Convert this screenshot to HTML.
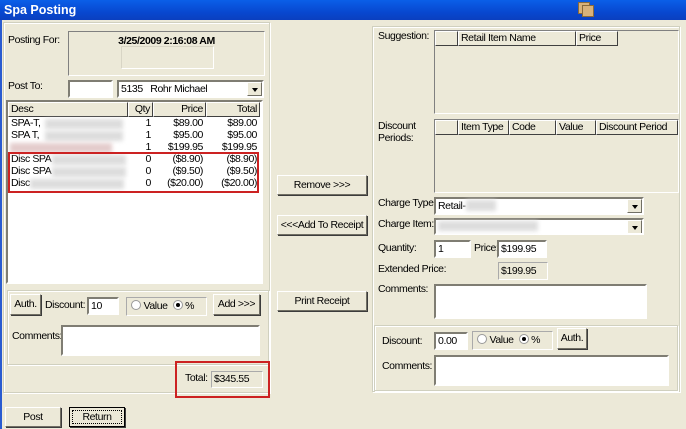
<!DOCTYPE html>
<html><head><style>
*{box-sizing:border-box;margin:0;padding:0}
body{width:686px;height:429px;overflow:hidden;background:#ECE9D8;font-family:"Liberation Sans",Arial,sans-serif;font-size:10.5px;letter-spacing:-0.4px;color:#000;position:relative;white-space:nowrap}
.a{position:absolute}
.title{left:0;top:0;width:686px;height:20px;background:linear-gradient(#0A5FE8,#0848D0 60%,#0A3FBF);color:#fff;font-weight:bold;font-size:12.5px;letter-spacing:0;padding:3px 0 0 4px}
.grp{border:1px solid #D0D0BF;box-shadow:inset 1px 1px 0 #fff,1px 1px 0 #fff}
.sunk2{border:2px solid;border-color:#7F7D73 #fff #fff #7F7D73;background:#fff;overflow:hidden}
.btn{border:1px solid;border-color:#fff #716F64 #716F64 #fff;box-shadow:1px 1px 0 #3c3c3c;background:#ECE9D8;text-align:center;line-height:18px;overflow:hidden}
.hdr{border:1px solid;border-color:#fff #404040 #404040 #fff;background:#ECE9D8;height:15px;line-height:13px;padding:0 2px;overflow:hidden}
.r{text-align:right}
.blur{background:#ddd;filter:blur(2px)}
.dd{position:absolute;right:1px;top:1px;width:15px;height:14px;border:1px solid;border-color:#fff #716F64 #716F64 #fff;background:#ECE9D8}
.dd:after{content:"";position:absolute;left:4px;top:5px;border:3px solid transparent;border-top:4px solid #000}
.rad{display:inline-block;width:10px;height:10px;border-radius:50%;border:1px solid #999;background:#fff;vertical-align:-1px;position:relative}
.rad.on:after{content:"";position:absolute;left:2px;top:2px;width:4px;height:4px;border-radius:50%;background:#000}
.red{border:2px solid #CC2222}
</style></head><body>
<div class="a title">Spa Posting</div>
<div class="a" style="left:578px;top:2px;width:12px;height:12px;background:#D8B27A;border:1px solid #8a6a3a"></div>
<div class="a" style="left:582px;top:5px;width:12px;height:12px;background:#D8B27A;border:1px solid #8a6a3a"></div>
<div class="a" style="left:0;top:20px;width:2px;height:409px;background:#2A5BD0"></div>

<div class="a grp" style="left:3px;top:22px;width:267px;height:371px"></div>
<div class="a" style="left:8px;top:34px">Posting For:</div>
<div class="a" style="left:68px;top:31px;width:197px;height:45px;border:1px solid;border-color:#808080 #fff #fff #808080"></div>
<div class="a" style="left:68px;top:35px;width:197px;text-align:center;font-weight:bold">3/25/2009 2:16:08 AM</div>
<div class="a" style="left:121px;top:46px;width:93px;height:23px;border:1px solid;border-color:#D8D5C5 #fff #fff #D8D5C5"></div>
<div class="a" style="left:8px;top:80px">Post To:</div>
<div class="a sunk2" style="left:68px;top:80px;width:45px;height:18px"></div>
<div class="a sunk2" style="left:117px;top:80px;width:147px;height:18px;padding:1px 2px;overflow:visible">5135&nbsp;&nbsp; Rohr Michael<div class="dd" style="right:0;top:0"></div></div>

<div class="a sunk2" style="left:6px;top:100px;width:257px;height:184px"></div>
<div class="a hdr" style="left:8px;top:102px;width:120px">Desc</div>
<div class="a hdr r" style="left:128px;top:102px;width:25px">Qty</div>
<div class="a hdr r" style="left:153px;top:102px;width:53px">Price</div>
<div class="a hdr r" style="left:206px;top:102px;width:54px">Total</div>
<div class="a" style="left:11px;top:117px;line-height:12px">SPA-T,<br>SPA T,<br>&nbsp;<br>Disc SPA<br>Disc SPA<br>Disc</div>
<div class="a blur" style="left:45px;top:119px;width:78px;height:10px"></div>
<div class="a blur" style="left:45px;top:131px;width:78px;height:10px"></div>
<div class="a blur" style="left:10px;top:143px;width:102px;height:10px;background:#e4cccc"></div>
<div class="a blur" style="left:52px;top:155px;width:74px;height:10px"></div>
<div class="a blur" style="left:52px;top:167px;width:74px;height:10px"></div>
<div class="a blur" style="left:30px;top:179px;width:94px;height:10px"></div>
<div class="a r" style="left:128px;top:117px;width:23px;line-height:12px">1<br>1<br>1<br>0<br>0<br>0</div>
<div class="a r" style="left:153px;top:117px;width:50px;line-height:12px">$89.00<br>$95.00<br>$199.95<br>($8.90)<br>($9.50)<br>($20.00)</div>
<div class="a r" style="left:206px;top:117px;width:51px;line-height:12px">$89.00<br>$95.00<br>$199.95<br>($8.90)<br>($9.50)<br>($20.00)</div>
<div class="a red" style="left:8px;top:152px;width:251px;height:41px"></div>

<div class="a grp" style="left:7px;top:290px;width:262px;height:75px"></div>
<div class="a btn" style="left:10px;top:294px;width:31px;height:21px">Auth.</div>
<div class="a" style="left:45px;top:299px">Discount:</div>
<div class="a sunk2" style="left:87px;top:297px;width:32px;height:18px;padding:1px 2px">10</div>
<div class="a" style="left:126px;top:297px;width:81px;height:19px;border:1px solid;border-color:#aaa #fff #fff #aaa;padding:2px 4px"><span class="rad"></span> Value &nbsp;<span class="rad on"></span> %</div>
<div class="a btn" style="left:213px;top:294px;width:47px;height:21px">Add &gt;&gt;&gt;</div>
<div class="a" style="left:12px;top:330px">Comments:</div>
<div class="a sunk2" style="left:61px;top:325px;width:199px;height:31px"></div>
<div class="a" style="left:185px;top:372px">Total:</div>
<div class="a" style="left:211px;top:371px;width:52px;height:17px;border:1px solid;border-color:#aaa #fff #fff #aaa;padding:1px 2px">$345.55</div>
<div class="a red" style="left:175px;top:361px;width:95px;height:37px"></div>

<div class="a btn" style="left:5px;top:407px;width:56px;height:20px">Post</div>
<div class="a btn" style="left:69px;top:407px;width:56px;height:20px;border:1px solid #000;outline:1px dotted #000;outline-offset:-4px">Return</div>

<div class="a btn" style="left:277px;top:175px;width:90px;height:20px">Remove &gt;&gt;&gt;</div>
<div class="a btn" style="left:277px;top:215px;width:90px;height:20px">&lt;&lt;&lt;Add To Receipt</div>
<div class="a btn" style="left:277px;top:291px;width:90px;height:20px">Print Receipt</div>

<div class="a grp" style="left:372px;top:26px;width:308px;height:366px"></div>
<div class="a" style="left:378px;top:30px">Suggestion:</div>
<div class="a" style="left:434px;top:30px;width:245px;height:84px;border:1px solid;border-color:#808080 #fff #fff #808080"></div>
<div class="a hdr" style="left:435px;top:31px;width:23px"></div>
<div class="a hdr" style="left:458px;top:31px;width:118px">Retail Item Name</div>
<div class="a hdr" style="left:576px;top:31px;width:42px">Price</div>
<div class="a" style="left:378px;top:120px;line-height:12px">Discount<br>Periods:</div>
<div class="a" style="left:434px;top:119px;width:245px;height:74px;border:1px solid;border-color:#808080 #fff #fff #808080"></div>
<div class="a hdr" style="left:435px;top:120px;width:23px"></div>
<div class="a hdr" style="left:458px;top:120px;width:51px">Item Type</div>
<div class="a hdr" style="left:509px;top:120px;width:47px">Code</div>
<div class="a hdr" style="left:556px;top:120px;width:40px">Value</div>
<div class="a hdr" style="left:596px;top:120px;width:82px">Discount Period</div>
<div class="a" style="left:378px;top:197px">Charge Type:</div>
<div class="a sunk2" style="left:434px;top:197px;width:210px;height:18px;padding:1px 2px">Retail-<div class="dd" style="right:0;top:0"></div></div>
<div class="a blur" style="left:466px;top:200px;width:30px;height:11px"></div>
<div class="a" style="left:378px;top:218px">Charge Item:</div>
<div class="a sunk2" style="left:434px;top:218px;width:210px;height:17px"><div class="dd" style="right:0;top:0"></div></div>
<div class="a blur" style="left:438px;top:221px;width:100px;height:10px"></div>
<div class="a" style="left:378px;top:242px">Quantity:</div>
<div class="a sunk2" style="left:434px;top:240px;width:37px;height:18px;padding:1px 2px">1</div>
<div class="a" style="left:474px;top:242px">Price:</div>
<div class="a sunk2" style="left:497px;top:240px;width:50px;height:18px;padding:1px 2px">$199.95</div>
<div class="a" style="left:378px;top:263px">Extended Price:</div>
<div class="a" style="left:498px;top:262px;width:50px;height:18px;border:1px solid;border-color:#aaa #fff #fff #aaa;padding:2px 2px">$199.95</div>
<div class="a" style="left:378px;top:283px">Comments:</div>
<div class="a sunk2" style="left:434px;top:284px;width:213px;height:35px"></div>
<div class="a grp" style="left:374px;top:325px;width:304px;height:66px"></div>
<div class="a" style="left:382px;top:335px">Discount:</div>
<div class="a sunk2" style="left:434px;top:332px;width:34px;height:18px;padding:1px 2px">0.00</div>
<div class="a" style="left:472px;top:331px;width:81px;height:19px;border:1px solid;border-color:#aaa #fff #fff #aaa;padding:2px 4px"><span class="rad"></span> Value &nbsp;<span class="rad on"></span> %</div>
<div class="a btn" style="left:557px;top:328px;width:30px;height:21px">Auth.</div>
<div class="a" style="left:382px;top:360px">Comments:</div>
<div class="a sunk2" style="left:434px;top:355px;width:235px;height:31px"></div>
</body></html>
